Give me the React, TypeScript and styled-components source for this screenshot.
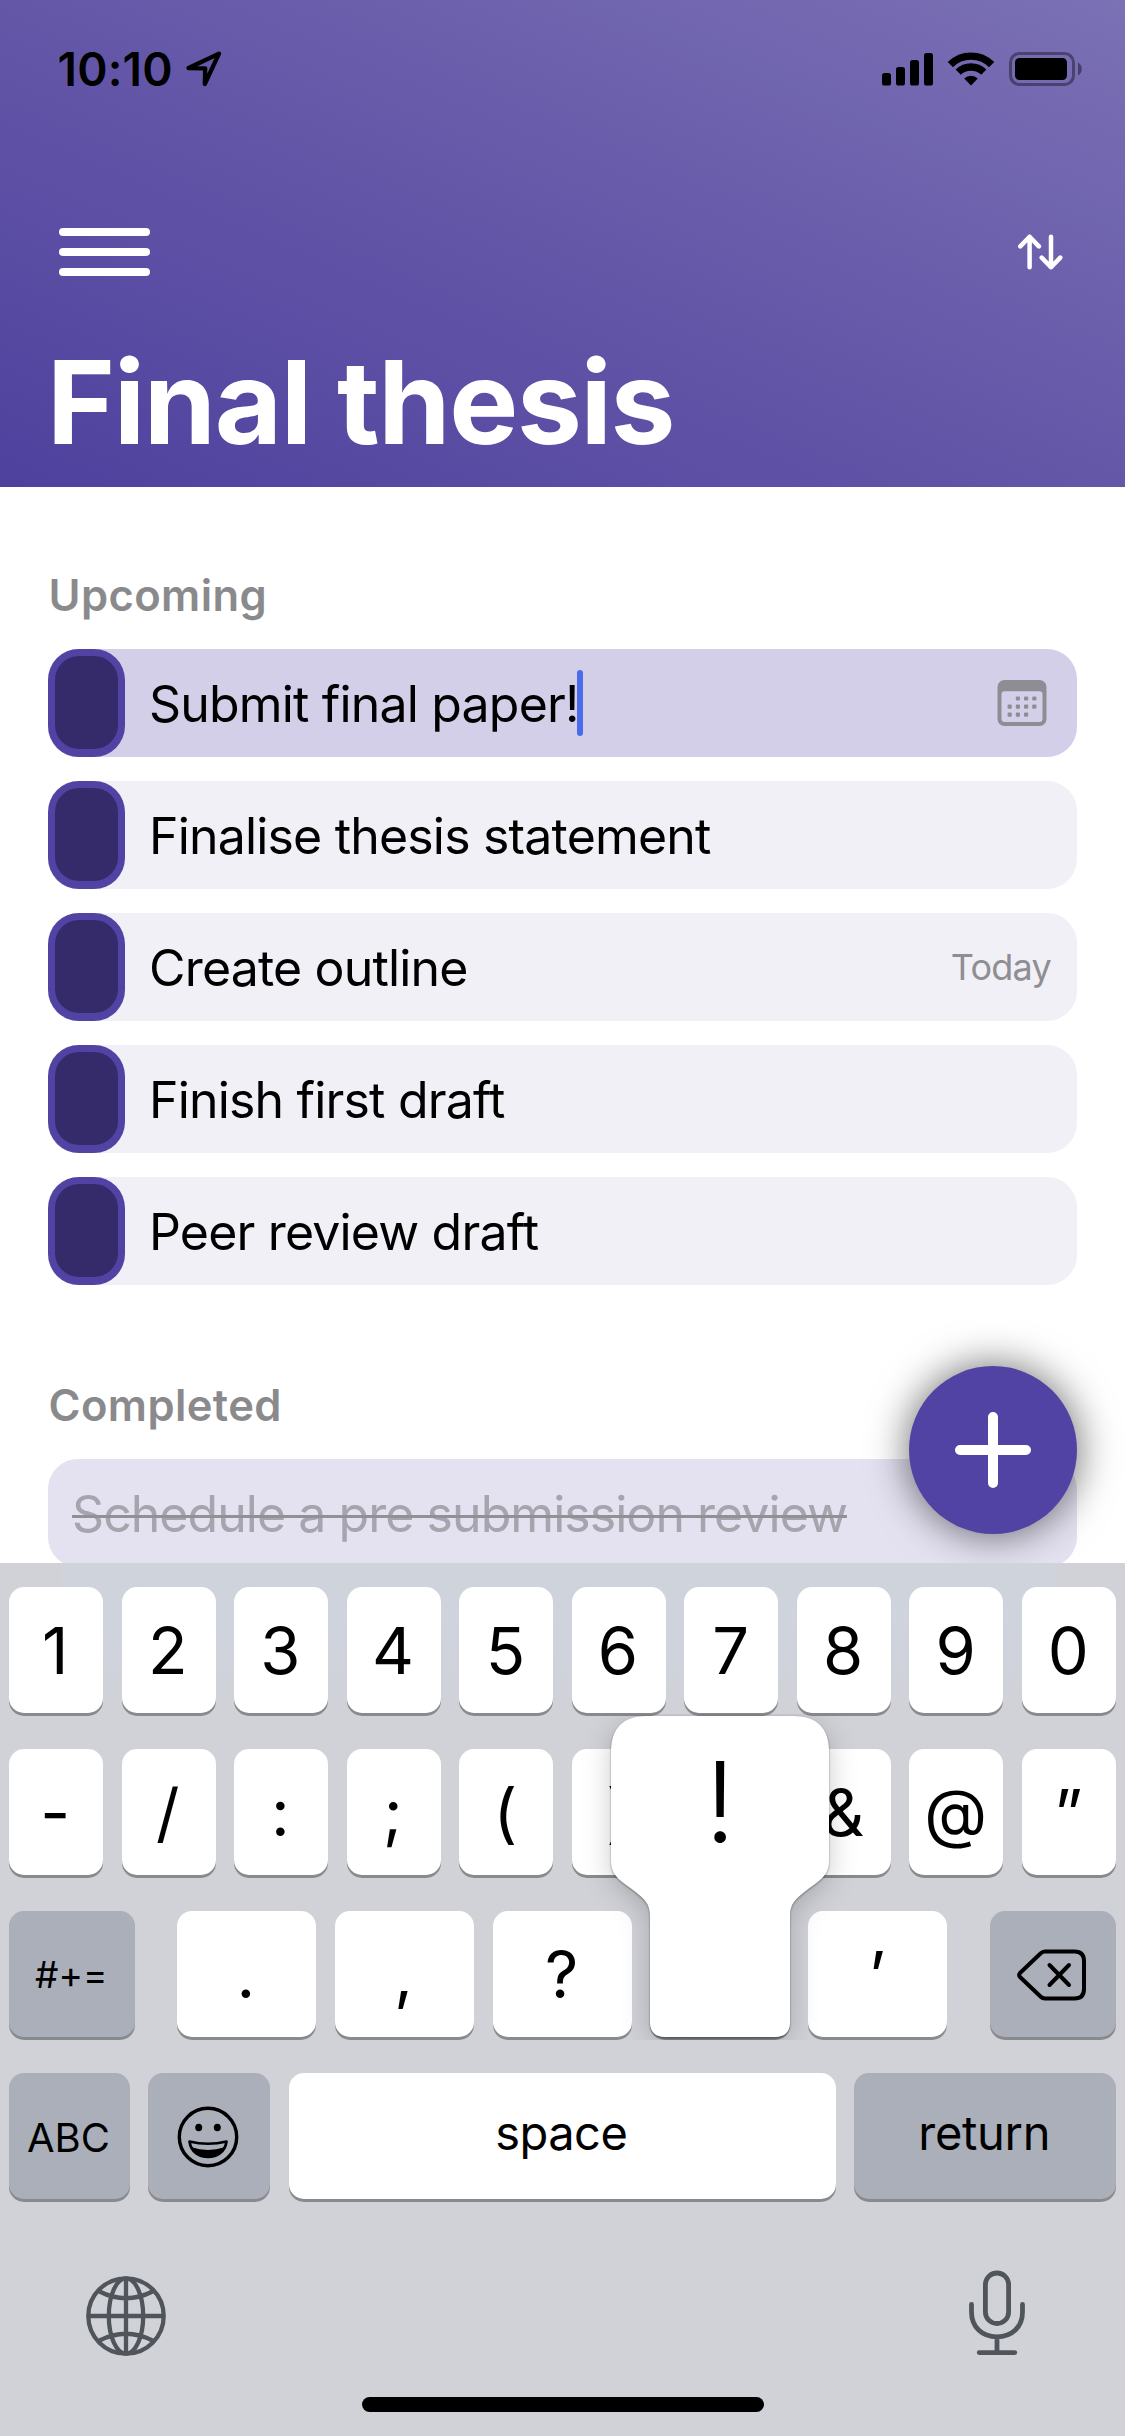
import React from "react";
import styled, { createGlobalStyle, css } from "styled-components";

const GlobalStyle = createGlobalStyle`
  *, *::before, *::after { box-sizing: border-box; }
  body {
    margin: 0;
    background: #fff;
    font-family: Inter, "Liberation Sans", sans-serif;
    color: #000;
  }
  svg { display: block; }
`;

const Screen = styled.div`
  width: 1125px;
  height: 2436px;
  display: flex;
  flex-direction: column;
  overflow: hidden;
  background: #fff;
`;

/* ---------- header ---------- */

const Header = styled.header`
  flex: none;
  height: 487px;
  background: linear-gradient(to top right, #4e419e 0%, #6457a8 50%, #7b71b5 100%);
`;

const StatusBar = styled.div`
  height: 138px;
  padding: 0 43px 0 57.5px;
  display: flex;
  align-items: center;
  justify-content: space-between;
`;

const StatusGroup = styled.div<{ $gap: number }>`
  display: flex;
  align-items: center;
  gap: ${(p) => p.$gap}px;
`;

const Clock = styled.span`
  font-size: 46px;
  line-height: 54px;
  font-weight: 600;
  letter-spacing: 0.2px;
`;

const Toolbar = styled.div`
  height: 228px;
  padding: 0 62px 0 59px;
  display: flex;
  align-items: center;
  justify-content: space-between;
`;

const MenuButton = styled.button`
  width: 91px;
  padding: 0;
  border: 0;
  background: none;
  display: flex;
  flex-direction: column;
  gap: 12.5px;
`;

const MenuBar = styled.span`
  height: 7.6px;
  border-radius: 4px;
  background: #fff;
`;

const Title = styled.h1`
  margin: 0;
  padding-left: 47px;
  font-size: 116px;
  line-height: 72px;
  font-weight: 700;
  letter-spacing: -1.35px;
  color: #fff;
  white-space: nowrap;
`;

/* ---------- list ---------- */

const Content = styled.main`
  position: relative;
  flex: none;
  height: 1076px;
  padding: 81px 48px 0;
  overflow: hidden;
`;

const SectionTitle = styled.h2<{ $spaced?: boolean }>`
  margin: ${(p) => (p.$spaced ? "93px" : "0")} 0 27px;
  padding-left: 0.5px;
  font-size: 43.5px;
  line-height: 54px;
  font-weight: 600;
  letter-spacing: 0.4px;
  color: #8a8a8d;
`;

const List = styled.div`
  display: flex;
  flex-direction: column;
  gap: 24px;
`;

const Row = styled.div<{ $tone: "plain" | "active" | "done" }>`
  height: 108px;
  display: flex;
  align-items: center;
  border-radius: 30px;
  padding-right: 26px;
  background: ${(p) => ({ plain: "#f1f0f6", active: "#d4cfe8", done: "#e4e1f1" })[p.$tone]};
`;

const Check = styled.span`
  flex: none;
  width: 77px;
  height: 108px;
  padding: 7px 7px 8px;
  border-radius: 31px;
  background: #5043a3;
  display: flex;
`;

const CheckFill = styled.span`
  flex: 1;
  border-radius: 24px;
  background: #352b6a;
`;

const TaskText = styled.span<{ $done?: boolean }>`
  padding-top: 2px;
  margin-left: 24px;
  font-size: 50px;
  line-height: 60px;
  white-space: nowrap;
  letter-spacing: -0.82px;
  ${(p) =>
    p.$done &&
    css`
      color: #a6a4ac;
      letter-spacing: -0.95px;
      text-decoration: line-through;
      text-decoration-color: #929097;
      text-decoration-thickness: 3px;
    `}
`;

const Caret = styled.span`
  width: 6px;
  height: 66px;
  margin-left: -2px;
  border-radius: 3px;
  background: #4a6cea;
`;

const Trailing = styled.span`
  margin-left: auto;
  font-size: 36px;
  line-height: 44px;
  letter-spacing: -0.75px;
  color: #8e8e93;
`;

const AddButton = styled.button`
  position: absolute;
  right: 48px;
  bottom: 29px;
  width: 168px;
  height: 168px;
  padding: 0;
  border: 0;
  border-radius: 50%;
  background: #5043a3;
  box-shadow: 0 0 42px rgba(0, 0, 0, 0.6);
  display: grid;
  place-items: center;
`;

/* ---------- keyboard ---------- */

const Keyboard = styled.section`
  flex: 1;
  padding: 24px 9px 0;
  display: flex;
  flex-direction: column;
  background:
    linear-gradient(to bottom, #cfd3dc 0, #cfd3dc 60px, rgba(207, 211, 220, 0) 150px) 61px 0 / 996px 160px no-repeat,
    #d1d2d8;
`;

const KeyRow = styled.div<{ $gap?: number }>`
  height: 126px;
  margin-bottom: 36px;
  display: flex;
  gap: ${(p) => p.$gap ?? 18}px;
`;

const KeyCap = styled.button<{ $width?: number; $dark?: boolean; $size?: number }>`
  position: relative;
  ${(p) => (p.$width ? `flex: none; width: ${p.$width}px;` : "flex: 1 1 0; min-width: 0;")}
  height: 126px;
  padding: 2px 1.5px 0 0;
  border: 0;
  border-radius: 15px;
  background: ${(p) => (p.$dark ? "#abafba" : "#fff")};
  box-shadow: 0 3px 0 #898a8d;
  color: #000;
  font-family: inherit;
  font-size: ${(p) => p.$size ?? 65}px;
  line-height: 1.2;
  display: flex;
  align-items: center;
  justify-content: center;
`;

const PunctuationKeys = styled.div`
  flex: 1;
  margin: 0 24px;
  display: flex;
  gap: 18.5px;
`;

const WordLabel = styled.span<{ $lift?: number; $tracking?: number }>`
  letter-spacing: ${(p) => p.$tracking ?? 0}px;
  padding-top: 1px;
  padding-bottom: ${(p) => p.$lift ?? 0}px;
`;

const Popup = styled.span`
  position: absolute;
  z-index: 2;
  left: 50%;
  bottom: 0;
  width: 218px;
  height: 321px;
  margin-left: -109px;
  clip-path: inset(-2px -40px -3px -40px);
`;

const PopupShape = styled.svg`
  overflow: visible;
  filter: drop-shadow(0 1px 1px rgba(0, 0, 0, 0.4)) drop-shadow(0 6px 14px rgba(0, 0, 0, 0.2));
`;

const PopupGlyph = styled.span`
  position: absolute;
  left: 0;
  right: 0;
  top: 26px;
  font-size: 111px;
  font-weight: 300;
  line-height: 120px;
  text-align: center;
`;

const Dock = styled.div`
  display: flex;
  align-items: center;
  justify-content: space-between;
  padding: 0 91px 0 77px;
  height: 86px;
  margin: 35px 0 41px;
`;

const GlobeSlot = styled.span`
  padding-top: 6px;
`;

const HomeIndicator = styled.div`
  width: 402px;
  height: 15px;
  border-radius: 8px;
  background: #000;
  margin: 0 auto;
`;

/* ---------- icons ---------- */

const LocationIcon = () => (
  <svg width="36" height="36" viewBox="0 0 36 36" fill="none" stroke="#000" strokeWidth="4.300" strokeLinejoin="round">
    <path d="M33 2.600 2.600 17 19.200 17.400 18.800 33Z" />
  </svg>
);

const SignalIcon = () => (
  <svg width="51" height="34" viewBox="0 0 51 34">
    <rect x="0" y="21" width="9" height="12.5" rx="2.6" />
    <rect x="14" y="15" width="9" height="18.5" rx="2.6" />
    <rect x="28" y="8" width="9" height="25.5" rx="2.6" />
    <rect x="42" y="1" width="9" height="32.5" rx="2.6" />
  </svg>
);

const WifiIcon = () => (
  <svg width="46" height="34" viewBox="0 0 46 34" fill="none" stroke="#000" strokeWidth="7.3">
    <path d="M2.4 12.6A29.2 29.2 0 0 1 43.6 12.6" />
    <path d="M10.2 20.2A18.3 18.3 0 0 1 35.8 20.2" />
    <path d="M23 33.6 16.2 26.6A9.7 9.7 0 0 1 29.8 26.6Z" fill="#000" stroke="none" />
  </svg>
);

const BatteryIcon = () => (
  <svg width="73" height="34" viewBox="0 0 73 34">
    <rect x="1.5" y="1.5" width="63" height="31" rx="9" fill="none" stroke="#000" strokeOpacity="0.38" strokeWidth="3" />
    <rect x="6" y="6" width="52" height="22" rx="4.5" />
    <path d="M69 10.5C74 13 74 21 69 23.5Z" fillOpacity="0.42" />
  </svg>
);

const SortIcon = () => (
  <svg width="45" height="36" viewBox="0 0 45 36" fill="none" stroke="#fff" strokeWidth="4.500" strokeLinecap="round" strokeLinejoin="round">
    <path d="M11.600 33.200V2.800M2.300 12.400 11.600 2.800l9.300 9.600" />
    <path d="M33 2.800v30.400M23.700 23.600 33 33.200l9.300-9.600" />
  </svg>
);

const calendarDots: [number, number][] = [
  [1, 0], [2, 0], [3, 0],
  [0, 1], [1, 1], [2, 1], [3, 1],
  [0, 2], [1, 2], [2, 2],
];

const CalendarIcon = () => (
  <svg width="54" height="46" viewBox="0 0 54 46" fill="#8e8d94">
    <path
      fillRule="evenodd"
      d="M7.5 0h35a7 7 0 0 1 7 7v32a7 7 0 0 1-7 7h-35a7 7 0 0 1-7-7V7a7 7 0 0 1 7-7ZM7.5 11.3a3 3 0 0 0-3 3V39a3 3 0 0 0 3 3h35a3 3 0 0 0 3-3V14.3a3 3 0 0 0-3-3Z"
    />
    {calendarDots.map(([c, r]) => (
      <rect key={`${c}-${r}`} x={10.6 + c * 8.2} y={16.4 + r * 8.1} width="4.2" height="4.2" rx="1" />
    ))}
  </svg>
);

const PlusIcon = () => (
  <svg width="76" height="76" viewBox="0 0 76 76" stroke="#fff" strokeWidth="10" strokeLinecap="round">
    <path d="M38 5v66M5 38h66" />
  </svg>
);

const BackspaceIcon = () => (
  <svg width="70" height="52" viewBox="0 0 70 52" fill="none" stroke="#000" strokeWidth="4" strokeLinecap="round" strokeLinejoin="round">
    <path d="M28 2.500H57.500Q67 2.500 67 12V40Q67 49.500 57.500 49.500H28Q25.500 49.500 23.500 47.500L3 28Q1.300 26 3 24L23.500 4.500Q25.500 2.500 28 2.500Z" />
    <path d="M32.500 16 52 36M52 16 32.500 36" />
  </svg>
);

const EmojiIcon = () => (
  <svg width="62" height="62" viewBox="0 0 62 62">
    <circle cx="31" cy="31" r="28.700" fill="none" stroke="#000" strokeWidth="3.400" />
    <ellipse cx="21.700" cy="21.500" rx="3.500" ry="3.800" />
    <ellipse cx="40.300" cy="21.500" rx="3.500" ry="3.800" />
    <path d="M12.500 35.500Q31 40 49.500 35.500C48 46 40 51 31 51C22 51 14 46 12.500 35.500Z" fill="none" stroke="#000" strokeWidth="2.700" strokeLinejoin="round" />
    <path d="M14.500 41.300Q31 46.500 47.500 41.300C45 48 38 51.500 31 51.500C24 51.500 17 48 14.500 41.300Z" />
  </svg>
);

const GlobeIcon = () => (
  <svg width="80" height="80" viewBox="0 0 80 80" fill="none" stroke="#50555c" strokeWidth="4.300">
    <circle cx="40" cy="40" r="37.700" />
    <ellipse cx="40" cy="40" rx="17.200" ry="37.700" />
    <path d="M40 2.500v75M2.500 40h75M13.500 15.500Q40 29 66.500 15.500M13.500 64.500Q40 51 66.500 64.500" />
  </svg>
);

const MicIcon = () => (
  <svg width="56" height="86" viewBox="0 0 56 86" fill="none" stroke="#50555c" strokeWidth="4.800" strokeLinecap="round">
    <rect x="16.400" y="3" width="23.200" height="50.500" rx="11.600" />
    <path d="M2.500 34.500V42C2.500 57 13 66.800 28 66.800S53.500 57 53.500 42V34.500M28 67v15M10.200 82.600h35.600" />
  </svg>
);

/* ---------- screen ---------- */

const upcoming: { text: string; due?: string; editing?: boolean }[] = [
  { text: "Submit final paper!", editing: true },
  { text: "Finalise thesis statement" },
  { text: "Create outline", due: "Today" },
  { text: "Finish first draft" },
  { text: "Peer review draft" },
];

const digits = ["1", "2", "3", "4", "5", "6", "7", "8", "9", "0"];
/* The seventh cap sits under the key popup and carries no label. */
const symbols = ["-", "/", ":", ";", "(", ")", "", "&", "@", "”"];
const punctuation = [".", ",", "?", "!", "’"];

const PressedKey = ({ label }: { label: string }) => (
  <KeyCap>
    <Popup>
      <PopupShape width="218" height="321" viewBox="0 0 218 321" fill="#fff">
        <path d="M36 0H182C206 0 218 12 218 36V145C218 160 208 165 196 174C184 183 179 188 179 200V306Q179 321 164 321H54Q39 321 39 306V200C39 188 34 183 22 174C10 165 0 160 0 145V36C0 12 12 0 36 0Z" />
      </PopupShape>
      <PopupGlyph>{label}</PopupGlyph>
    </Popup>
  </KeyCap>
);

export default function App() {
  return (
    <Screen>
      <GlobalStyle />
      <Header>
        <StatusBar>
          <StatusGroup $gap={13}>
            <Clock>10:10</Clock>
            <LocationIcon />
          </StatusGroup>
          <StatusGroup $gap={15}>
            <SignalIcon />
            <WifiIcon />
            <BatteryIcon />
          </StatusGroup>
        </StatusBar>
        <Toolbar>
          <MenuButton aria-label="Menu">
            <MenuBar />
            <MenuBar />
            <MenuBar />
          </MenuButton>
          <SortIcon />
        </Toolbar>
        <Title>Final thesis</Title>
      </Header>

      <Content>
        <SectionTitle>Upcoming</SectionTitle>
        <List>
          {upcoming.map((task) => (
            <Row key={task.text} $tone={task.editing ? "active" : "plain"}>
              <Check>
                <CheckFill />
              </Check>
              <TaskText>{task.text}</TaskText>
              {task.editing && <Caret />}
              {task.editing && (
                <Trailing>
                  <CalendarIcon />
                </Trailing>
              )}
              {task.due && <Trailing>{task.due}</Trailing>}
            </Row>
          ))}
        </List>
        <SectionTitle $spaced>Completed</SectionTitle>
        <List>
          <Row $tone="done">
            <TaskText $done>Schedule a pre submission review</TaskText>
          </Row>
        </List>
        <AddButton aria-label="Add">
          <PlusIcon />
        </AddButton>
      </Content>

      <Keyboard>
        <KeyRow $gap={18.5}>
          {digits.map((d) => (
            <KeyCap key={d}>{d}</KeyCap>
          ))}
        </KeyRow>
        <KeyRow $gap={18.5}>
          {symbols.map((s) => (
            <KeyCap key={s}>{s}</KeyCap>
          ))}
        </KeyRow>
        <KeyRow>
          <KeyCap $dark $width={126} $size={37}>
            #+=
          </KeyCap>
          <PunctuationKeys>
            {punctuation.map((p) => (p === "!" ? <PressedKey key={p} label={p} /> : <KeyCap key={p}>{p}</KeyCap>))}
          </PunctuationKeys>
          <KeyCap $dark $width={126.5} aria-label="Delete">
            <BackspaceIcon />
          </KeyCap>
        </KeyRow>
        <KeyRow $gap={18.5}>
          <KeyCap $dark $width={120.5} $size={40}>
            <WordLabel>ABC</WordLabel>
          </KeyCap>
          <KeyCap $dark $width={122} aria-label="Emoji">
            <EmojiIcon />
          </KeyCap>
          <KeyCap $size={47}>
            <WordLabel $lift={9} $tracking={-0.5}>space</WordLabel>
          </KeyCap>
          <KeyCap $dark $width={262} $size={47}>
            <WordLabel $lift={9} $tracking={-0.3}>return</WordLabel>
          </KeyCap>
        </KeyRow>
        <Dock>
          <GlobeSlot>
            <GlobeIcon />
          </GlobeSlot>
          <MicIcon />
        </Dock>
        <HomeIndicator />
      </Keyboard>
    </Screen>
  );
}
